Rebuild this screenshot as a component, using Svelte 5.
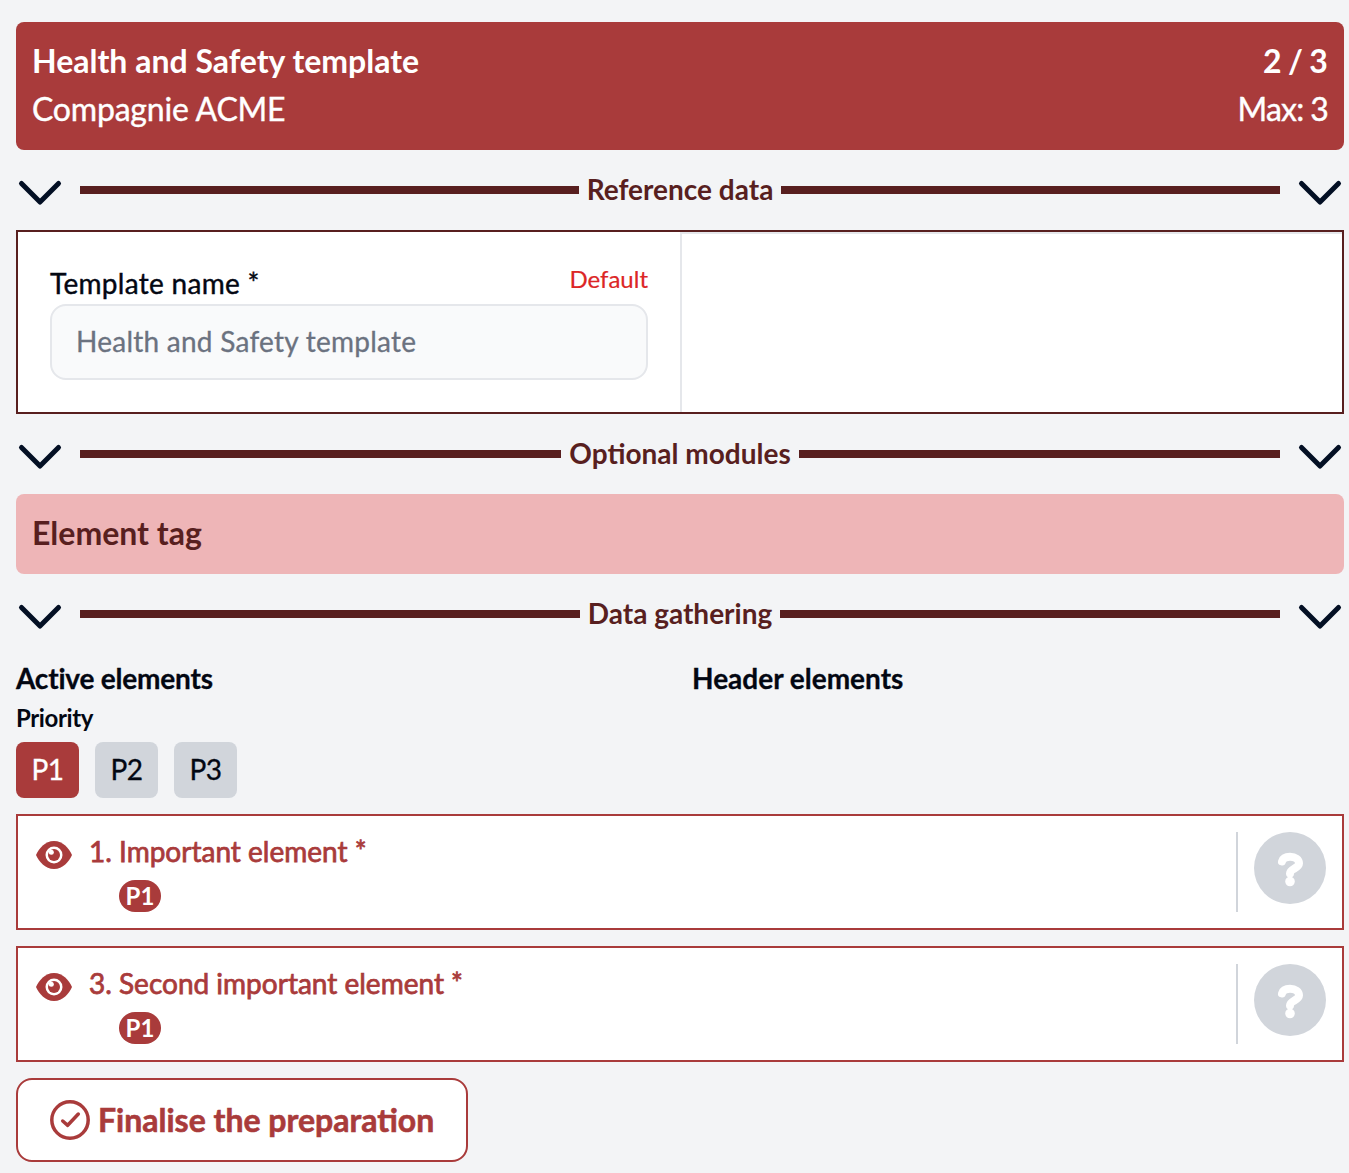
<script>
  const sections = { ref: 'Reference data', opt: 'Optional modules', data: 'Data gathering' };
  const elements = [
    { n: '1. Important element *' },
    { n: '3. Second important element *' }
  ];
</script>

{#snippet chevron()}
  <svg class="chev" viewBox="0 0 40 40" aria-hidden="true"><path d="M1.500 13.500 L20 32 L38.500 13.500" /></svg>
{/snippet}

{#snippet divider(label)}
  <div class="divider">
    {@render chevron()}
    <span class="rule"></span>
    <span class="dlabel">{label}</span>
    <span class="rule"></span>
    {@render chevron()}
  </div>
{/snippet}

<div class="page">
  <header class="head">
    <div class="hrow"><strong>Health and Safety template</strong><strong class="frac">2 / 3</strong></div>
    <div class="hrow"><span class="sub">Compagnie ACME</span><span class="max">Max: 3</span></div>
  </header>

  {@render divider(sections.ref)}

  <section class="card">
    <div class="left">
      <div class="labels"><span class="lab">Template name *</span><span class="def">Default</span></div>
      <div class="input">Health and Safety template</div>
    </div>
    <div class="right"></div>
  </section>

  {@render divider(sections.opt)}

  <div class="tag">Element tag</div>

  {@render divider(sections.data)}

  <div class="cols">
    <div>
      <h3 class="active">Active elements</h3>
      <div class="prio">Priority</div>
      <div class="btns">
        <button class="pb on">P1</button>
        <button class="pb">P2</button>
        <button class="pb">P3</button>
      </div>
    </div>
    <div><h3>Header elements</h3></div>
  </div>

  {#each elements as el}
    <div class="el">
      <svg class="eye" viewBox="0 0 36 28" aria-hidden="true">
        <path d="M18 0C9 0 3 7.500 0 14c3 6.500 9 14 18 14s15-7.500 18-14C33 7.500 27 0 18 0z" />
        <circle cx="18" cy="14" r="8.500" fill="#fff" />
        <circle cx="18" cy="14" r="6" />
        <circle cx="15.300" cy="11.300" r="2.500" fill="#fff" />
      </svg>
      <div class="elbody">
        <div class="eltitle">{el.n}</div>
        <span class="badge">P1</span>
      </div>
      <div class="help">
        <div class="circle">
          <svg viewBox="0 0 72 72" aria-hidden="true">
            <path class="q" d="M28 29.500c1-3.500 4-4.700 8-4.700 5.500 0 9 2.700 9 6.500 0 5.200-9 5-9 10.200" />
            <circle cx="36" cy="49.500" r="4.800" fill="#fff" />
          </svg>
        </div>
      </div>
    </div>
  {/each}

  <button class="final">
    <svg viewBox="0 0 40 40" aria-hidden="true"><circle cx="20" cy="20" r="18.200" /><path d="M12.700 21 L17.700 25.300 L28.300 14" /></svg>
    <span>Finalise the preparation</span>
  </button>
</div>

<style>
  :global(body) {
    margin: 0;
    background: #f3f4f6;
  }
  .page {
    box-sizing: border-box;
    width: 1349px;
    height: 1173px;
    padding: 22px 5px 0 16px;
    font-family: Lato, "Noto Sans", sans-serif;
    color: #030712;
    display: flex;
    flex-direction: column;
    overflow: hidden;
  }
  .head {
    background: #a93b3b;
    color: #fff;
    border-radius: 8px;
    padding: 15px 16px 17px;
    font-size: 32px;
    line-height: 48px;
  }
  .hrow { display: flex; justify-content: space-between; }
  .hrow strong { font-weight: 700; }
  .sub { -webkit-text-stroke: 0.4px #fff; letter-spacing: -0.2px; }
  .frac { word-spacing: -1.500px; letter-spacing: 0.1px; }
  .max { -webkit-text-stroke: 0.4px #fff; word-spacing: -1px; letter-spacing: -0.7px; }
  .divider {
    display: flex;
    align-items: center;
    height: 48px;
    margin: 16px 0;
    padding: 0 4px;
    color: #581f1f;
  }
  .chev { width: 40px; height: 40px; flex: none; margin-right: 20px; overflow: visible; }
  .divider .chev:last-child { margin: 0 0 0 20px; }
  .chev path { fill: none; stroke: #030f24; stroke-width: 5px; stroke-linecap: round; stroke-linejoin: round; }
  .rule { flex: 1; height: 8px; background: #581f1f; }
  .dlabel { font-size: 28px; font-weight: 700; padding: 0 8px 2px; white-space: nowrap; }
  .card {
    box-sizing: border-box;
    height: 184px;
    background: #fff;
    border: 2px solid #581f1f;
    display: grid;
    grid-template-columns: 662px 1fr;
  }
  .left { padding: 32px; box-sizing: border-box; }
  .right { border-left: 2px solid #e5e7eb; border-top: 2px solid #e5e7eb; }
  .labels { display: flex; justify-content: space-between; height: 40px; }
  .lab { font-size: 28px; line-height: 38px; letter-spacing: 0.3px; -webkit-text-stroke: 0.4px #030712; }
  .def { font-size: 24px; color: #dc2626; line-height: 30px; -webkit-text-stroke: 0.2px #dc2626; }
  .input {
    box-sizing: border-box;
    height: 76px;
    background: #f9fafb;
    border: 2px solid #e5e7eb;
    border-radius: 16px;
    padding: 0 24px;
    font-size: 28px;
    line-height: 70px;
    letter-spacing: 0.25px;
    color: #6b7280;
    -webkit-text-stroke: 0.3px #6b7280;
  }
  .tag {
    height: 80px;
    background: #eeb5b7;
    border-radius: 8px;
    color: #581f1f;
    font-size: 32px;
    font-weight: 700;
    line-height: 78px;
    padding: 0 16px;
  }
  .cols { display: grid; grid-template-columns: 676px 1fr; }
  h3 { margin: 4px 0 0; font-size: 28px; font-weight: 700; line-height: 40px; -webkit-text-stroke: 0.3px #030712; }
  h3.active { letter-spacing: -0.2px; }
  .prio { font-size: 24px; font-weight: 700; line-height: 32px; margin: 4px 0 8px; letter-spacing: -0.4px; }
  .btns { display: flex; gap: 16px; }
  .pb {
    width: 63px;
    height: 56px;
    border: 0;
    padding: 0 0 2px;
    border-radius: 8px;
    background: #d1d5db;
    color: #030712;
    font: 400 28px Lato, sans-serif;
    letter-spacing: -0.5px;
    -webkit-text-stroke: 0.3px currentColor;
  }
  .pb.on { background: #a93b3b; color: #fff; }
  .el {
    box-sizing: border-box;
    height: 116px;
    margin-top: 16px;
    background: #fff;
    border: 2px solid #a93b3b;
    display: flex;
    padding: 16px;
  }
  .eye { width: 36px; height: 28px; fill: #a93b3b; margin: 9px 17px 0 2px; flex: none; }
  .elbody { flex: 1; color: #a93b3b; }
  .eltitle { font-size: 28px; line-height: 38px; -webkit-text-stroke: 0.75px #a93b3b; }
  .badge {
    display: inline-block;
    width: 42px;
    height: 32px;
    margin: 10px 0 0 30px;
    background: #a93b3b;
    color: #fff;
    border-radius: 16px;
    font-size: 24px;
    font-weight: 700;
    line-height: 32px;
    text-align: center;
  }
  .help {
    border-left: 2px solid #d1d5db;
    padding-left: 16px;
    height: 80px;
    box-sizing: border-box;
  }
  .circle { width: 72px; height: 72px; background: #d1d5db; border-radius: 50%; }
  .circle svg { width: 72px; height: 72px; display: block; }
  .q { fill: none; stroke: #fff; stroke-width: 8px; stroke-linecap: round; }
  .final {
    box-sizing: border-box;
    align-self: flex-start;
    width: 452px;
    height: 84px;
    margin-top: 16px;
    background: #fff;
    border: 2px solid #a93b3b;
    border-radius: 16px;
    color: #a93b3b;
    display: flex;
    align-items: center;
    gap: 8px;
    padding: 0 32px 2px;
    font: 700 32px Lato, sans-serif;
    white-space: nowrap;
    -webkit-text-stroke: 0.6px #a93b3b;
  }
  .final svg { width: 40px; height: 40px; flex: none; fill: none; stroke: #a93b3b; stroke-width: 3.5px; stroke-linecap: round; stroke-linejoin: round; -webkit-text-stroke: 0; margin-top: 2px; }
</style>
